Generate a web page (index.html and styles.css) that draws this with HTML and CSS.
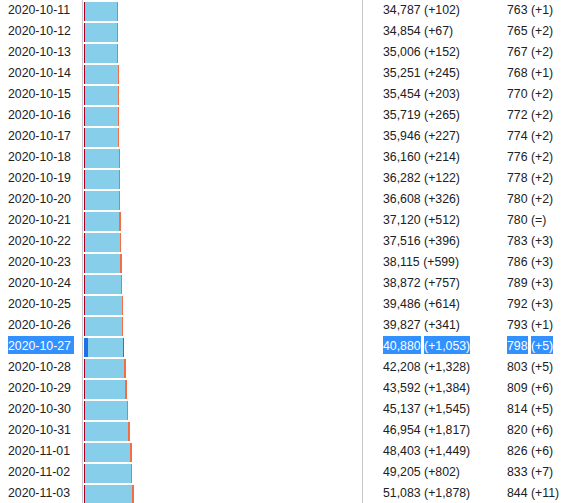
FILE: index.html
```html
<!DOCTYPE html>
<html lang="en">
<head>
    <meta charset="UTF-8">
    <meta name="viewport" content="width=device-width, initial-scale=1.0">
    <title>Cas de COVID-19 par jour</title>
    <link rel="stylesheet" href="styles.css">
</head>
<body>
<div id="chart" class="chart"></div>

<script>
    const rows = [
        ['2020-10-11', '34,787', '+102', '763', '+1'],
        ['2020-10-12', '34,854', '+67', '765', '+2'],
        ['2020-10-13', '35,006', '+152', '767', '+2'],
        ['2020-10-14', '35,251', '+245', '768', '+1'],
        ['2020-10-15', '35,454', '+203', '770', '+2'],
        ['2020-10-16', '35,719', '+265', '772', '+2'],
        ['2020-10-17', '35,946', '+227', '774', '+2'],
        ['2020-10-18', '36,160', '+214', '776', '+2'],
        ['2020-10-19', '36,282', '+122', '778', '+2'],
        ['2020-10-20', '36,608', '+326', '780', '+2'],
        ['2020-10-21', '37,120', '+512', '780', '='],
        ['2020-10-22', '37,516', '+396', '783', '+3'],
        ['2020-10-23', '38,115', '+599', '786', '+3'],
        ['2020-10-24', '38,872', '+757', '789', '+3'],
        ['2020-10-25', '39,486', '+614', '792', '+3'],
        ['2020-10-26', '39,827', '+341', '793', '+1'],
        ['2020-10-27', '40,880', '+1,053', '798', '+5'],
        ['2020-10-28', '42,208', '+1,328', '803', '+5'],
        ['2020-10-29', '43,592', '+1,384', '809', '+6'],
        ['2020-10-30', '45,137', '+1,545', '814', '+5'],
        ['2020-10-31', '46,954', '+1,817', '820', '+6'],
        ['2020-11-01', '48,403', '+1,449', '826', '+6'],
        ['2020-11-02', '49,205', '+802', '833', '+7'],
        ['2020-11-03', '51,083', '+1,878', '844', '+11']
    ];
    const selected = '2020-10-27';

    const chart = document.getElementById('chart');
    rows.forEach(r => {
        const cases = Number(r[1].replace(/,/g, ''));
        const total = cases * 0.985 / 1000;
        const active = 1 + (cases - 34787) / 16000;
        const sel = r[0] === selected;
        const deaths = sel ? 4 : 1;
        const recovered = total - deaths - active;
        const cls = sel ? ' sel' : '';
        chart.innerHTML += `<div class="row${cls}">
            <div class="date"><span class="txt">${r[0]}</span></div>
            <div class="bars">
                <div class="bar deaths" style="width:${deaths}px"></div>
                <div class="bar recovered" style="width:${recovered.toFixed(2)}px"></div>
                <div class="bar active" style="width:${active.toFixed(2)}px"></div>
            </div>
            <div class="num"><span class="txt">${r[1]}</span> <span class="txt">(${r[2]})</span></div>
            <div class="num dead"><span class="txt">${r[3]}</span> <span class="txt">(${r[4]})</span></div>
        </div>`;
    });
</script>
</body>
</html>
```

FILE: styles.css
```css
body {
    margin: 0;
    background: #fff;
    color: #202122;
    font-family: "Liberation Sans", Arial, sans-serif;
    font-size: 12.3px;
    overflow: hidden;
}
.chart {
    display: flex;
    flex-direction: column;
}
.row {
    display: grid;
    grid-template-columns: 82px 280px 145px 1fr;
    height: 21px;
}
.date {
    padding-left: 8px;
    line-height: 20px;
    white-space: nowrap;
}
.bars {
    display: flex;
    border-left: 1px solid #c8c8c8;
    padding: 2px 0 0 1px;
}
.bar {
    height: 19px;
    flex: none;
}
.deaths {
    background-color: #a50026;
}
.recovered {
    background-color: #87ceeb;
}
.active {
    background-color: #f46d43;
}
.num {
    border-left: 1px solid #c8c8c8;
    padding-left: 20px;
    line-height: 20px;
    white-space: nowrap;
}
.num.dead {
    border-left: none;
    padding-left: 0;
}
.sel .txt {
    background-color: #3390ff;
    color: #fff;
    padding: 3px 0 1px;
}
.sel .date .txt {
    padding-right: 3px;
}
.sel .deaths {
    background-color: #1f6fe6;
}
.sel .active {
    background-color: #2a72de;
}
```
